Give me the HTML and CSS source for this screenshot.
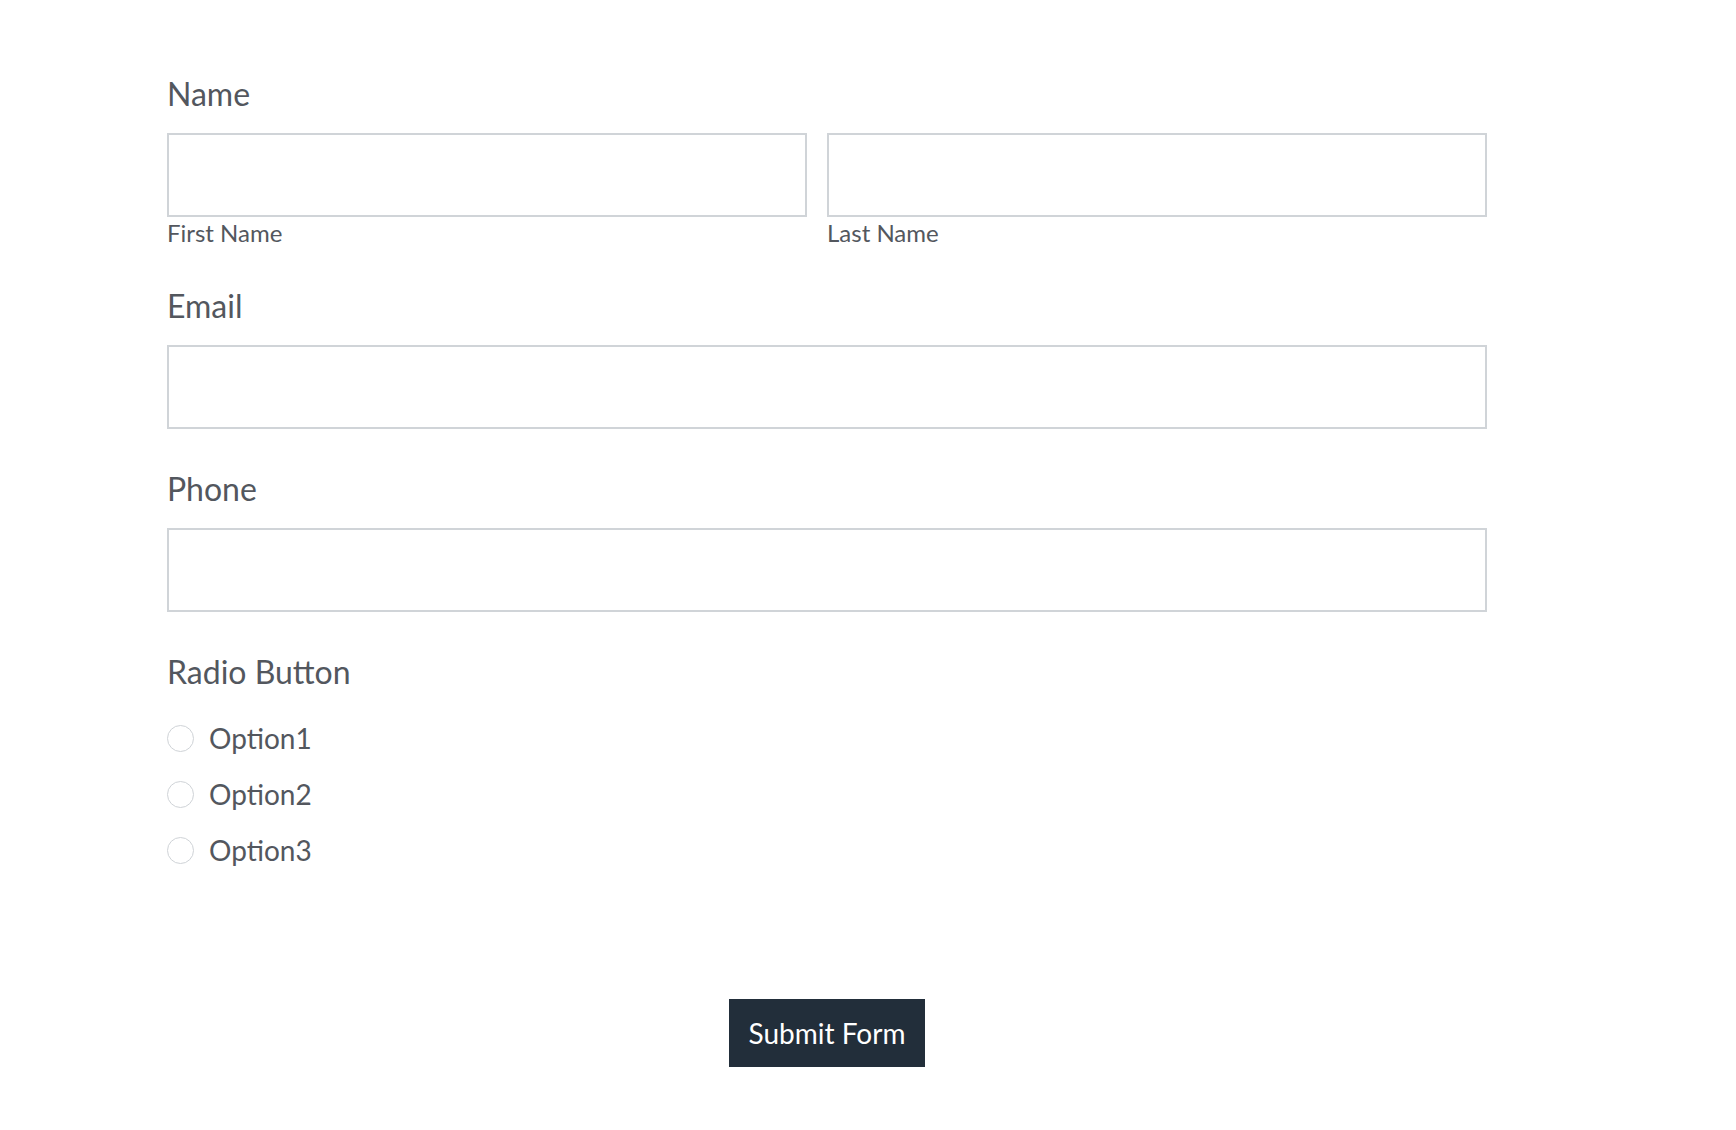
FILE: index.html
```html
<!DOCTYPE html>
<html lang="en">
<head>
<meta charset="utf-8">
<title>Form</title>
<link rel="stylesheet" href="styles.css">
</head>
<body>
<form class="form">
  <div class="field">
    <div class="label">Name</div>
    <div class="name-row">
      <div class="name-col">
        <div class="input"></div>
        <div class="sublabel">First Name</div>
      </div>
      <div class="name-col">
        <div class="input"></div>
        <div class="sublabel">Last Name</div>
      </div>
    </div>
  </div>
  <div class="field">
    <div class="label">Email</div>
    <div class="input"></div>
  </div>
  <div class="field">
    <div class="label">Phone</div>
    <div class="input"></div>
  </div>
  <div class="field">
    <div class="label">Radio Button</div>
    <div class="options">
      <div class="option"><span class="radio"></span><span class="option-text">Option1</span></div>
      <div class="option"><span class="radio"></span><span class="option-text">Option2</span></div>
      <div class="option"><span class="radio"></span><span class="option-text">Option3</span></div>
    </div>
  </div>
  <div class="actions">
    <div class="submit">Submit Form</div>
  </div>
</form>
</body>
</html>
```

FILE: styles.css
```css
html, body {
  margin: 0;
  padding: 0;
  background: #ffffff;
}

body {
  font-family: "Lato", "Liberation Sans", sans-serif;
  color: #53575e;
}

.form {
  width: 1320px;
  margin-left: 167px;
  padding-top: 75px;
  display: flex;
  flex-direction: column;
  gap: 41px;
}

.field {
  display: flex;
  flex-direction: column;
}

.label {
  font-size: 32px;
  line-height: 38px;
  margin-bottom: 20px;
}

.name-row {
  display: grid;
  grid-template-columns: 640px 1fr;
  gap: 20px;
}

.name-col {
  display: flex;
  flex-direction: column;
}

.input {
  box-sizing: border-box;
  height: 84px;
  border: 2px solid #d0d4d8;
  background: #ffffff;
}

.sublabel {
  font-size: 24px;
  line-height: 29px;
  margin-top: 1px;
  margin-bottom: -1px;
}

.options {
  display: flex;
  flex-direction: column;
  gap: 22px;
  margin-top: 10px;
}

.option {
  display: flex;
  align-items: center;
  height: 34px;
}

.radio {
  box-sizing: border-box;
  width: 27px;
  height: 27px;
  border: 1.5px solid #cfd3d7;
  border-radius: 50%;
  margin-right: 15px;
  flex: none;
}

.option-text {
  font-size: 28px;
  line-height: 34px;
}

.actions {
  display: flex;
  justify-content: center;
  margin-top: 91px;
}

.submit {
  box-sizing: border-box;
  background: #222e3a;
  color: #ffffff;
  font-size: 28px;
  line-height: 34px;
  padding: 17px 0;
  width: 196px;
  text-align: center;
  white-space: nowrap;
}
```
